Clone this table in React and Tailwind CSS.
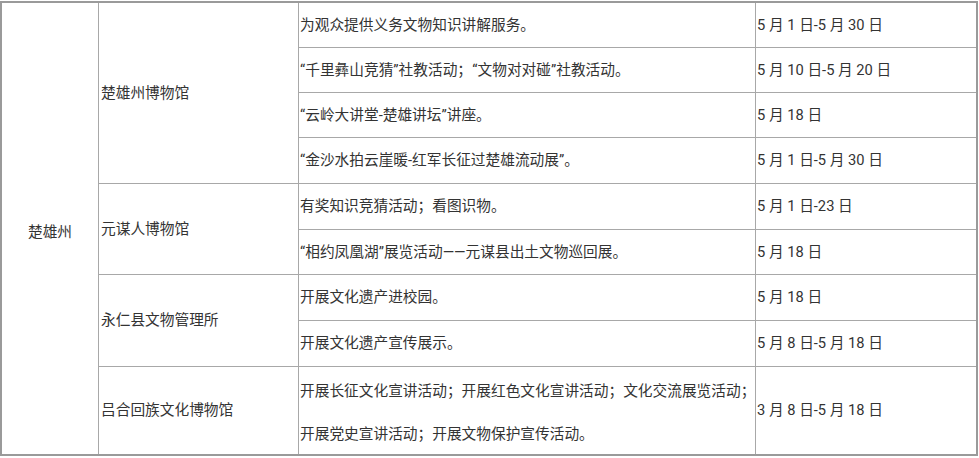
import React from "react";

const rows = [
  {
    place: "楚雄州博物馆",
    items: [
      ["为观众提供义务文物知识讲解服务。", "5 月 1 日-5 月 30 日"],
      [
        <>
          “千里彝山竞猜”社教活动<span className="inline-block w-[15px]">；</span>“文物对对碰”社教活动。
        </>,
        "5 月 10 日-5 月 20 日",
      ],
      ["“云岭大讲堂-楚雄讲坛”讲座。", "5 月 18 日"],
      ["“金沙水拍云崖暖-红军长征过楚雄流动展”。", "5 月 1 日-5 月 30 日"],
    ],
  },
  {
    place: "元谋人博物馆",
    items: [
      ["有奖知识竞猜活动；看图识物。", "5 月 1 日-23 日"],
      ["“相约凤凰湖”展览活动——元谋县出土文物巡回展。", "5 月 18 日"],
    ],
  },
  {
    place: "永仁县文物管理所",
    items: [
      ["开展文化遗产进校园。", "5 月 18 日"],
      ["开展文化遗产宣传展示。", "5 月 8 日-5 月 18 日"],
    ],
  },
];

const spans = ["row-span-4", "row-span-2", "row-span-2"];

export default function App() {
  return (
    <div className="w-[979px] h-[458px] bg-white pt-px font-['Roboto','Noto_Sans_CJK_SC',sans-serif] text-[14.7px] text-[#333] [text-spacing-trim:space-all]">
      <div className="w-[978px] border-2 border-[#9a9a9a] bg-[#a8a8a8] grid gap-px grid-cols-[96px_199px_456px_220px] grid-rows-[44px_44px_44px_45px_45px_44px_45px_45px_87px]">
        <div className="row-span-9 bg-white flex items-center justify-center pt-2">楚雄州</div>
        {rows.map((g, gi) => (
          <React.Fragment key={gi}>
            <div className={`${spans[gi]} bg-white flex items-center pl-[2px]`}>{g.place}</div>
            {g.items.map(([a, b], i) => (
              <React.Fragment key={i}>
                <div className="bg-white flex items-center pl-[1px] whitespace-nowrap">{a}</div>
                <div className="bg-white flex items-center pl-[1px] whitespace-nowrap">{b}</div>
              </React.Fragment>
            ))}
          </React.Fragment>
        ))}
        <div className="bg-white flex items-center pl-[2px]">吕合回族文化博物馆</div>
        <div className="bg-white flex flex-col justify-center pl-[1px] pt-1 leading-[43px] whitespace-nowrap">
          <span>开展长征文化宣讲活动；开展红色文化宣讲活动；文化交流展览活动；</span>
          <span>开展党史宣讲活动；开展文物保护宣传活动。</span>
        </div>
        <div className="bg-white flex items-center pl-[1px]">3 月 8 日-5 月 18 日</div>
      </div>
    </div>
  );
}
